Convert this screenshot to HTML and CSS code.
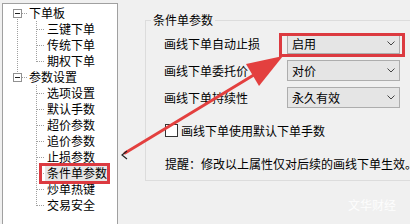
FILE: index.html
```html
<!DOCTYPE html>
<html lang="zh-CN">
<head>
<meta charset="utf-8">
<title>条件单参数</title>
<link rel="stylesheet" href="styles.css">
</head>
<body>
<div class="tree-panel">
  <ul class="tree">
    <li class="node">
      <div class="row root"><span class="box"><span class="minus"></span></span><span class="hline"></span><span class="label">下单板</span></div>
      <ul class="children">
        <li class="row child"><span class="conn"></span><span class="label">三键下单</span></li>
        <li class="row child"><span class="conn"></span><span class="label">传统下单</span></li>
        <li class="row child last"><span class="conn"></span><span class="label">期权下单</span></li>
      </ul>
    </li>
    <li class="node">
      <div class="row root"><span class="box"><span class="minus"></span></span><span class="hline"></span><span class="label">参数设置</span></div>
      <ul class="children">
        <li class="row child"><span class="conn"></span><span class="label">选项设置</span></li>
        <li class="row child"><span class="conn"></span><span class="label">默认手数</span></li>
        <li class="row child"><span class="conn"></span><span class="label">超价参数</span></li>
        <li class="row child"><span class="conn"></span><span class="label">追价参数</span></li>
        <li class="row child"><span class="conn"></span><span class="label">止损参数</span></li>
        <li class="row child"><span class="conn"></span><span class="label selected">条件单参数</span></li>
        <li class="row child"><span class="conn"></span><span class="label">炒单热键</span></li>
        <li class="row child last"><span class="conn"></span><span class="label">交易安全</span></li>
      </ul>
    </li>
  </ul>
</div>
<div class="main">
  <fieldset class="group">
    <legend class="group-title">条件单参数</legend>
    <div class="form">
      <span class="field-label">画线下单自动止损</span>
      <div class="select"><span>启用</span><svg class="chev" width="8" height="5" viewBox="0 0 8 5"><polyline points="0.5,0.5 4,4 7.5,0.5" fill="none" stroke="#444" stroke-width="1"/></svg></div>
      <span class="field-label">画线下单委托价</span>
      <div class="select"><span>对价</span><svg class="chev" width="8" height="5" viewBox="0 0 8 5"><polyline points="0.5,0.5 4,4 7.5,0.5" fill="none" stroke="#444" stroke-width="1"/></svg></div>
      <span class="field-label">画线下单持续性</span>
      <div class="select"><span>永久有效</span><svg class="chev" width="8" height="5" viewBox="0 0 8 5"><polyline points="0.5,0.5 4,4 7.5,0.5" fill="none" stroke="#444" stroke-width="1"/></svg></div>
    </div>
    <label class="check-row"><span class="checkbox"></span><span>画线下单使用默认下单手数</span></label>
    <p class="hint">提醒：修改以上属性仅对后续的画线下单生效。</p>
  </fieldset>
</div>
<svg class="annot" width="410" height="224" viewBox="0 0 410 224">
  <rect x="40.5" y="164.5" width="68" height="18" fill="none" stroke="#dc3a40" stroke-width="3"/>
  <rect x="280.5" y="34.5" width="123" height="21" fill="none" stroke="#dc3a40" stroke-width="3"/>
  <line x1="125" y1="153" x2="262" y2="70" stroke="#e3403f" stroke-width="3" stroke-linecap="round"/>
  <polygon points="283,56 259,86 246,64" fill="#e3403f"/>
  <polyline points="127,151 122,155 127,159" fill="none" stroke="#222" stroke-width="1.2"/>
</svg>
<span class="watermark">文华财经</span>
</body>
</html>
```
FILE: styles.css
```css
* { box-sizing: border-box; }
html, body { margin: 0; padding: 0; }
body {
  width: 410px;
  height: 224px;
  overflow: hidden;
  position: relative;
  background: #f0f0f0;
  font-family: "Noto Sans CJK SC", "Noto Sans", sans-serif;
  font-size: 12px;
  color: #000;
  display: flex;
  align-items: flex-start;
}
.tree-panel {
  margin: 3px 0 0 2px;
  width: 116px;
  height: 221px;
  border: 1px solid #a0a0a0;
  border-bottom: 0;
  background: #fff;
  padding-top: 1px;
}
.tree, .children {
  list-style: none;
  margin: 0;
  padding: 0;
}
.tree {
  background-image: repeating-linear-gradient(to bottom, #a0a0a0 0 1px, transparent 1px 2px);
  background-repeat: no-repeat;
  background-position: 14px 8px;
  background-size: 1px 64px;
}
.row {
  height: 16px;
  display: flex;
  align-items: center;
  line-height: 16px;
  white-space: nowrap;
}
.box {
  width: 9px;
  height: 9px;
  margin-left: 10px;
  border: 1px solid #919191;
  background: #fff;
  display: flex;
  align-items: center;
  justify-content: center;
}
.minus {
  width: 5px;
  height: 1px;
  background: #222;
}
.hline {
  width: 6px;
  height: 1px;
  background: repeating-linear-gradient(to right, #a0a0a0 0 1px, transparent 1px 2px);
}
.root .label { margin-left: 1px; }
.child { padding-left: 33px; }
.conn {
  width: 9px;
  align-self: stretch;
  background-image:
    repeating-linear-gradient(to bottom, #a0a0a0 0 1px, transparent 1px 2px),
    repeating-linear-gradient(to right, #a0a0a0 0 1px, transparent 1px 2px);
  background-repeat: no-repeat;
  background-size: 1px 100%, 100% 1px;
  background-position: 0 0, 1px 8px;
}
.child.last .conn { background-size: 1px 9px, 100% 1px; }
.child .label { padding: 0 2px; }
.label.selected { background: #e6e6e6; }

.main {
  flex: 1;
  overflow: hidden;
  height: 224px;
}
.group {
  margin: 13px 0 0 27px;
  width: 300px;
  border: 1px solid #dcdcdc;
  padding: 0 0 9px 5px;
}
.group-title {
  padding: 0 2px;
  line-height: 14px;
}
.form {
  margin: 6px 0 0 13px;
  display: grid;
  grid-template-columns: 123px 113px;
  grid-auto-rows: 21px;
  row-gap: 6px;
  align-items: center;
}
.field-label { white-space: nowrap; line-height: 14px; }
.select {
  height: 21px;
  border: 1px solid #adadad;
  background: #e5e5e5;
  display: flex;
  align-items: center;
  justify-content: space-between;
  padding: 0 4px 0 4px;
  line-height: 14px;
}
.chev { display: block; }
.check-row {
  margin: 16px 0 0 14px;
  display: flex;
  align-items: center;
  height: 13px;
  white-space: nowrap;
}
.checkbox {
  width: 13px;
  height: 13px;
  border: 1px solid #333;
  background: #fff;
  margin-right: 3px;
}
.hint {
  margin: 20px 0 0 14px;
  line-height: 14px;
  white-space: nowrap;
}
.annot {
  position: absolute;
  left: 0;
  top: 0;
  pointer-events: none;
}
.watermark {
  position: absolute;
  left: 348px;
  top: 198px;
  color: rgba(255, 255, 255, 0.9);
  font-size: 12px;
  line-height: 14px;
}
```
